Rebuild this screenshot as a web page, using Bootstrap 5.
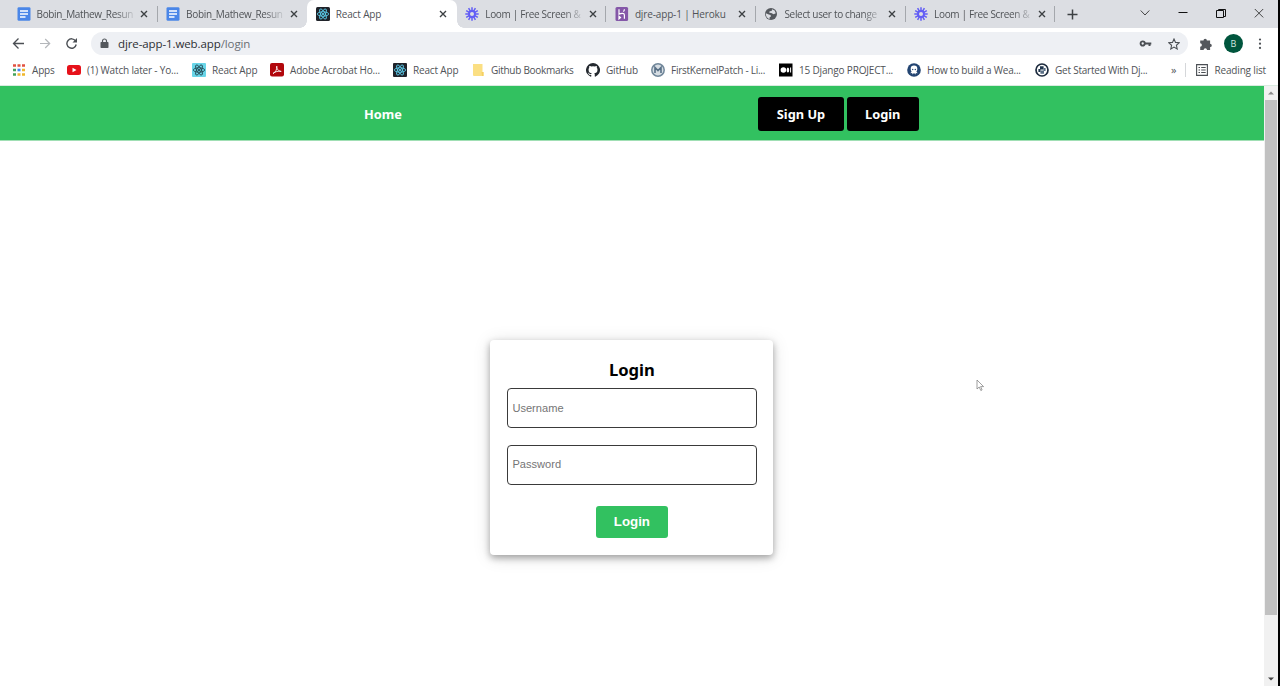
<!DOCTYPE html>
<html lang="en">

<head>
    <meta charset="UTF-8">
    <meta name="viewport" content="width=device-width, initial-scale=1.0">
    <title>React App</title>
    <link href="https://cdn.jsdelivr.net/npm/bootstrap@5.3.0/dist/css/bootstrap.min.css" rel="stylesheet">
    <style>
        body {
            width: 1280px;
            height: 686px;
            overflow: hidden;
            background: #fff;
            font-family: 'Open Sans', 'Noto Sans', sans-serif;
            font-size: 10px;
            line-height: 14px;
            color: #505357;
        }

        svg { display: block; flex: none; }

        .window-frame { width: 1278px; height: 686px; }
        .window-edge { width: 2px; background: #000; }

        /* tab strip */
        .tab-strip { height: 28px; background: #dcdee3; padding-left: 8px; }
        .browser-tab {
            width: 149.6px;
            height: 28px;
            padding: 0 9.5px 0 8.5px;
            position: relative;
        }
        .tab-title {
            width: 98px;
            margin-left: 6px;
            white-space: nowrap;
            letter-spacing: -.14px;
        }
        .tab-fade {
            letter-spacing: -.33px;
            -webkit-mask-image: linear-gradient(90deg, #000 80%, rgba(0, 0, 0, .15) 99%);
            mask-image: linear-gradient(90deg, #000 80%, rgba(0, 0, 0, .15) 99%);
        }
        .tab-line::after {
            content: '';
            position: absolute;
            right: 0;
            top: 6px;
            width: 1px;
            height: 16px;
            background: #a4a7ac;
        }
        .tab-active { background: #fff; border-radius: 7px 7px 0 0; }
        .tab-active::before, .tab-active::after {
            content: '';
            position: absolute;
            bottom: 0;
            width: 7px;
            height: 7px;
        }
        .tab-active::before { left: -7px; background: radial-gradient(circle at 0 0, transparent 6.5px, #fff 7px); }
        .tab-active::after { right: -7px; background: radial-gradient(circle at 100% 0, transparent 6.5px, #fff 7px); }
        .new-tab { margin-left: 12px; }
        .window-buttons { gap: 28px; padding-right: 14px; }

        /* toolbar */
        .toolbar { height: 30px; padding: 1px 12px 0 12px; }
        .go-forward { margin-left: 15px; }
        .reload { margin-left: 15px; }
        .address-bar {
            width: 1097px;
            height: 23px;
            margin-left: 13px;
            padding: 0 8px 0 9px;
            border-radius: 12px;
            background: #eef0f4;
            font-size: 11.5px;
            letter-spacing: -.1px;
            color: #2c2f33;
        }
        .address-text { margin-left: 9px; }
        .address-path { color: #6b6f74; }
        .extensions { margin-left: 11px; }
        .avatar-dot {
            width: 19px;
            height: 19px;
            margin-left: 11px;
            border-radius: 50%;
            background: #00553d;
            color: #d5e8e0;
            font-size: 9px;
        }
        .menu-dots { margin-left: 15px; }

        /* bookmarks */
        .bookmarks { height: 28px; padding: 0 0 3px 12px; border-bottom: 1px solid #d9ebe0; letter-spacing: -.17px; }
        .bookmark { flex: none; gap: 6px; white-space: nowrap; }
        .bookmark:nth-child(1) { width: 55px; }
        .bookmark:nth-child(2) { width: 125px; }
        .bookmark:nth-child(3) { width: 78px; }
        .bookmark:nth-child(4) { width: 123px; }
        .bookmark:nth-child(5) { width: 79px; }
        .bookmark:nth-child(6) { width: 114px; letter-spacing: -.28px; }
        .bookmark:nth-child(7) { width: 65px; }
        .bookmark:nth-child(8) { width: 128px; letter-spacing: -.26px; }
        .bookmark:nth-child(9) { width: 128px; }
        .bookmark:nth-child(10) { width: 128px; letter-spacing: -.22px; }
        .bookmark:nth-child(11) { width: 136px; letter-spacing: -.22px; }
        .reading-list { gap: 7px; }
        .more-marks { width: 14px; font-size: 11px; }
        .marks-line { width: 1px; height: 14px; background: #d5d7da; margin-right: 9.5px; }

        /* page */
        .page-view { height: 600px; }
        .site-nav {
            height: 54px;
            padding-top: 1px;
            background: #32c160;
            font-family: 'Noto Sans', 'Open Sans', sans-serif;
            font-weight: 700;
            font-size: 12.8px;
            box-shadow: 0 1px 0 #a0dfb4;
        }
        .nav-home { margin-left: 364px; padding-top: 1px; color: #fff; width: 394px; }
        .nav-dark {
            height: 34px;
            padding-top: 1px;
            background: #000;
            color: #fff;
            border-radius: 3px;
            margin-right: 3px;
        }
        .nav-signup { width: 86px; }
        .nav-login { width: 71.5px; }
        .login-box {
            width: 283px;
            height: 215px;
            margin: 200px 0 0 490.4px;
            padding: 17px 16px 16px;
            border-radius: 4px;
            background: #fff;
            box-shadow: 0 3px 7px rgba(0, 0, 0, .32), 0 2px 18px rgba(0, 0, 0, .12);
        }
        .login-title {
            font-family: 'Noto Sans', 'Open Sans', sans-serif;
            font-size: 16.6px;
            line-height: 26px;
            font-weight: 700;
            color: #000;
            margin: 0 0 5px;
        }
        .login-field {
            width: 250px;
            height: 40px;
            border: 1px solid #3a3a3a;
            border-radius: 4px;
            padding: 0 4px 0 4.5px;
            margin-bottom: 17px;
            font-family: 'Liberation Sans', Arial, sans-serif;
            font-size: 11.1px;
            outline: 0;
        }
        .login-field[type=password] { padding-bottom: 2px; }
        .login-field::placeholder { color: #757575; opacity: 1; }
        .login-submit {
            width: 72px;
            height: 32px;
            margin-top: 4px;
            border: 0;
            border-radius: 3px;
            background: #32c160;
            color: #fff;
            font-family: 'Liberation Sans', Arial, sans-serif;
            font-weight: 700;
            font-size: 13.3px;
            padding: 0;
        }

        /* scrollbar */
        .scroll-track { width: 14px; height: 600px; background: #f1f1f1; padding: 0 1px; }
        .scroll-thumb { height: 515px; background: #c1c1c1; }
        .scroll-cap { height: 14px; }

        .mouse-pointer { position: absolute; left: 976px; top: 379px; }
    </style>
</head>

<body>
    <!-- shared icons -->
    <svg width="0" height="0" class="position-absolute">
        <symbol id="doc" viewBox="0 0 14 14">
            <rect x=".5" y=".2" width="13" height="13.6" rx="1.4" fill="#4a86e8" />
            <path d="M3 4h8M3 7h8M3 10h5.5" stroke="#fff" stroke-width="1.4" />
        </symbol>
        <symbol id="react" viewBox="0 0 14 14">
            <g fill="none" stroke="currentColor" stroke-width=".8">
                <ellipse cx="7" cy="7" rx="5.7" ry="2.2" />
                <ellipse cx="7" cy="7" rx="5.7" ry="2.2" transform="rotate(60 7 7)" />
                <ellipse cx="7" cy="7" rx="5.7" ry="2.2" transform="rotate(120 7 7)" />
            </g>
            <circle cx="7" cy="7" r="1.1" fill="currentColor" />
        </symbol>
        <symbol id="loom" viewBox="0 0 14 14">
            <g stroke="#625df5" stroke-width="1.5">
                <path d="M7 .3v13.4M.3 7h13.4M3.6 1.2l6.8 11.6M10.4 1.2L3.6 12.8M1.2 3.6l11.6 6.8M1.2 10.4l11.6-6.8" />
            </g>
            <circle cx="7" cy="7" r="3.9" fill="#625df5" />
            <circle cx="7" cy="7" r="2" fill="#dcdee3" />
        </symbol>
        <symbol id="cross" viewBox="0 0 8 8">
            <path d="M1 1l6 6M7 1L1 7" stroke="#3c4043" stroke-width="1.35" />
        </symbol>
    </svg>

    <div class="d-flex">
        <div class="window-frame">
            <!-- tab strip -->
            <div class="tab-strip d-flex align-items-center">
                <div class="browser-tab tab-line d-flex align-items-center">
                    <svg width="14" height="14"><use href="#doc" /></svg>
                    <div class="tab-title tab-fade">Bobin_Mathew_Resun</div>
                    <svg class="ms-auto" width="8" height="8"><use href="#cross" /></svg>
                </div>
                <div class="browser-tab d-flex align-items-center">
                    <svg width="14" height="14"><use href="#doc" /></svg>
                    <div class="tab-title tab-fade">Bobin_Mathew_Resun</div>
                    <svg class="ms-auto" width="8" height="8"><use href="#cross" /></svg>
                </div>
                <div class="browser-tab tab-active d-flex align-items-center">
                    <svg width="14" height="14" color="#61dafb"><rect width="14" height="14" rx="1.5" fill="#20232a" /><use href="#react" /></svg>
                    <div class="tab-title">React App</div>
                    <svg class="ms-auto" width="8" height="8"><use href="#cross" /></svg>
                </div>
                <div class="browser-tab tab-line d-flex align-items-center">
                    <svg width="14" height="14"><use href="#loom" /></svg>
                    <div class="tab-title tab-fade">Loom | Free Screen &amp;</div>
                    <svg class="ms-auto" width="8" height="8"><use href="#cross" /></svg>
                </div>
                <div class="browser-tab tab-line d-flex align-items-center">
                    <svg width="14" height="14" viewBox="0 0 14 14"><rect x=".5" width="12.6" height="14" rx="1.5" fill="#8457a8" /><path d="M4 2.3v4.8c2-.9 5.4-1.3 5.4.8v3.8M4 9.3v2.6l1.5-1.3zM9.4 2.3c0 1-.4 1.7-1 2.3" fill="none" stroke="#fff" stroke-width="1.2" /></svg>
                    <div class="tab-title">djre-app-1 | Heroku</div>
                    <svg class="ms-auto" width="8" height="8"><use href="#cross" /></svg>
                </div>
                <div class="browser-tab tab-line d-flex align-items-center">
                    <svg width="14" height="14" viewBox="0 0 14 14"><circle cx="7" cy="7" r="6" fill="#55595e" /><path d="M8 2.2l2.6 1.2 1.2 2.8-2.2 1L7.3 6l-2-.3.3-1.5L7.7 4zM1.8 6.3l3 1.2 1.8.4.3 1.6-1.4 1 .2 1.6C3.5 11.7 1.6 9.3 1.8 6.3z" fill="#dcdee3" /></svg>
                    <div class="tab-title tab-fade">Select user to change</div>
                    <svg class="ms-auto" width="8" height="8"><use href="#cross" /></svg>
                </div>
                <div class="browser-tab tab-line d-flex align-items-center">
                    <svg width="14" height="14"><use href="#loom" /></svg>
                    <div class="tab-title tab-fade">Loom | Free Screen &amp;</div>
                    <svg class="ms-auto" width="8" height="8"><use href="#cross" /></svg>
                </div>
                <svg class="new-tab" width="11" height="11" viewBox="0 0 11 11"><path d="M5.5.5v10M.5 5.5h10" stroke="#3c4043" stroke-width="1.5" /></svg>
                <div class="window-buttons d-flex align-items-center ms-auto">
                    <svg width="10" height="12" viewBox="0 0 10 12"><path d="M.7 2.5L5 7l4.3-4.5" fill="none" stroke="#333" stroke-width=".9" /></svg>
                    <svg width="10" height="12" viewBox="0 0 10 12"><path d="M.5 4.5h9" stroke="#111" /></svg>
                    <svg width="10" height="12" viewBox="0 0 10 12"><path d="M.5 2.500h7v7h-7zM2.500 2.500v-1h7v7h-2" fill="none" stroke="#111" /></svg>
                    <svg width="10" height="12" viewBox="0 0 10 12"><path d="M.8 1l8.4 8.4M9.2 1L.8 9.4" stroke="#333" stroke-width=".9" /></svg>
                </div>
            </div>

            <!-- toolbar -->
            <div class="toolbar d-flex align-items-center">
                <svg width="13" height="12" viewBox="0 0 13 12"><path d="M12 5.5H1.500M6.5.5l-5 5 5 5" fill="none" stroke="#4b4f54" stroke-width="1.3" /></svg>
                <svg class="go-forward" width="11" height="12" viewBox="0 0 11 12"><path d="M0 5.5h10M5.2 1l4.5 4.5-4.5 4.5" fill="none" stroke="#b4b7bb" stroke-width="1.2" /></svg>
                <svg class="reload" width="12" height="12" viewBox="0 0 12 12"><path d="M9.5 2.900A4.700 4.700 0 1 0 10.200 6.500" fill="none" stroke="#4b4f54" stroke-width="1.400" /><path d="M11 0v4.500H6.500z" fill="#4b4f54" /></svg>
                <div class="address-bar d-flex align-items-center">
                    <svg width="9" height="11" viewBox="0 0 9 11"><rect x=".5" y="4" width="8" height="6" rx=".8" fill="#54585d" /><path d="M2.5 4.500V3a2 2 0 0 1 4 0v1.500" fill="none" stroke="#54585d" stroke-width="1.200" /></svg>
                    <div class="address-text">djre-app-1.web.app<span class="address-path">/login</span></div>
                    <svg class="ms-auto" width="13" height="8" viewBox="0 0 13 8"><circle cx="3.700" cy="3.500" r="2.100" fill="none" stroke="#4b4f54" stroke-width="1.900" /><path d="M6 3.500h6.300M10.500 3.500v2.600" stroke="#4b4f54" stroke-width="2" /></svg>
                    <svg class="ms-3" width="12" height="12" viewBox="0 0 12 12"><path d="M6 1l1.500 3.400 3.700.4-2.800 2.500.8 3.700L6 9.100 2.800 11l.8-3.700L.8 4.800l3.700-.4z" fill="none" stroke="#4b4f54" stroke-width="1.100" /></svg>
                </div>
                <svg class="extensions" width="14" height="14" viewBox="0 0 14 14"><path d="M1.200 3.500h3.300a1.700 1.700 0 1 1 3.400 0h3.200v3.200a1.700 1.700 0 1 1 0 3.400V13H8a1.700 1.700 0 0 0-3.400 0H1.200V9.700a1.700 1.700 0 0 0 0-3.400z" fill="#54585d" /></svg>
                <div class="avatar-dot d-flex align-items-center justify-content-center">B</div>
                <svg class="menu-dots" width="4" height="12" viewBox="0 0 4 12" fill="#4b4f54"><circle cx="2" cy="1.500" r="1.100" /><circle cx="2" cy="5.700" r="1.100" /><circle cx="2" cy="9.900" r="1.100" /></svg>
            </div>

            <!-- bookmarks bar -->
            <div class="bookmarks d-flex align-items-center">
                <div class="bookmark d-flex align-items-center">
                    <svg width="14" height="14" viewBox="0 0 14 14"><path d="M1 2.500h3M5.500 2.500h3M10 2.500h3" stroke="#e25241" stroke-width="2.600" /><path d="M1 7h3M1 11.500h3" stroke="#44a35c" stroke-width="2.600" /><path d="M5.500 7h3" stroke="#4285f4" stroke-width="2.600" /><path d="M10 7h3M5.500 11.500h3M10 11.500h3" stroke="#efb72d" stroke-width="2.600" /></svg>
                    <span>Apps</span>
                </div>
                <div class="bookmark d-flex align-items-center">
                    <svg width="14" height="14" viewBox="0 0 14 14"><rect y="2" width="14" height="10" rx="2.500" fill="#e6111a" /><path d="M5.500 4.700v4.600L9.500 7z" fill="#fff" /></svg>
                    <span>(1) Watch later - Yo...</span>
                </div>
                <div class="bookmark d-flex align-items-center">
                    <svg width="14" height="14" color="#1d3c46"><rect width="14" height="14" rx="1" fill="#69d5e8" /><use href="#react" /></svg>
                    <span>React App</span>
                </div>
                <div class="bookmark d-flex align-items-center">
                    <svg width="14" height="14" viewBox="0 0 14 14"><rect width="14" height="13.500" rx="2" fill="#b1070c" /><path d="M3 10.500C5.500 9.500 7.300 6 6.800 3.200c-.8 2 1.800 5.300 4.400 5.200-2.500-.8-6.500.4-8.200 2.100z" fill="none" stroke="#fff" stroke-width=".9" /></svg>
                    <span>Adobe Acrobat Ho...</span>
                </div>
                <div class="bookmark d-flex align-items-center">
                    <svg width="14" height="14" color="#61dafb"><rect width="14" height="14" rx="1" fill="#20232a" /><use href="#react" /></svg>
                    <span>React App</span>
                </div>
                <div class="bookmark d-flex align-items-center">
                    <svg width="13" height="14" viewBox="0 0 13 14"><path d="M1 1h9.500v8h1V13H1.500L1 12z" fill="#fbdf83" /><path d="M9.500 9h2v4h-1.500z" fill="#f5d061" /></svg>
                    <span>Github Bookmarks</span>
                </div>
                <div class="bookmark d-flex align-items-center">
                    <svg width="14" height="14" viewBox="0 0 16 16"><path fill="#24292f" d="M8 0a8 8 0 0 0-2.530 15.590c.4.070.550-.170.550-.380v-1.490c-2.010.370-2.530-.490-2.690-.940-.090-.230-.480-.940-.820-1.130-.280-.150-.680-.520-.010-.530.630-.010 1.080.580 1.230.820.720 1.210 1.870.870 2.330.660.070-.520.280-.870.510-1.070-1.780-.2-3.640-.890-3.640-3.950 0-.870.310-1.590.820-2.150-.080-.2-.360-1.020.080-2.120 0 0 .670-.210 2.200.820a7.500 7.500 0 0 1 4 0c1.530-1.040 2.200-.820 2.200-.820.440 1.100.160 1.920.080 2.120.510.560.820 1.270.820 2.150 0 3.070-1.870 3.750-3.650 3.950.290.250.540.730.540 1.480v2.200c0 .210.150.460.550.380A8 8 0 0 0 8 0z" /></svg>
                    <span>GitHub</span>
                </div>
                <div class="bookmark d-flex align-items-center">
                    <svg width="14" height="14" viewBox="0 0 14 14"><circle cx="7" cy="7" r="6.200" fill="#d6dde3" stroke="#71879a" stroke-width="1.500" /><path d="M4 10V4.500l3 3 3-3V10" fill="none" stroke="#587086" stroke-width="1.600" /></svg>
                    <span>FirstKernelPatch - Li...</span>
                </div>
                <div class="bookmark d-flex align-items-center">
                    <svg width="14" height="14" viewBox="0 0 14 14"><rect y=".5" width="13.500" height="13" fill="#000" /><circle cx="4.400" cy="7" r="2.800" fill="#fff" /><ellipse cx="8.900" cy="7" rx="1.300" ry="2.600" fill="#fff" /><path d="M11.600 4.500v5" stroke="#fff" /></svg>
                    <span>15 Django PROJECT...</span>
                </div>
                <div class="bookmark d-flex align-items-center">
                    <svg width="14" height="14" viewBox="0 0 14 14"><circle cx="7" cy="7" r="6.800" fill="#234572" /><path d="M3.700 5.800a3.300 3.300 0 0 1 6.600 0c0 1.800-.6 2.500-.9 3l1.400 1.400-2-.2-.3 1.400L7 10l-1.500 1.400-.3-1.400-2 .2 1.400-1.400c-.3-.5-.9-1.200-.9-3z" fill="#fff" /><circle cx="5.700" cy="6.500" r=".7" fill="#234572" /><circle cx="8.300" cy="6.500" r=".7" fill="#234572" /></svg>
                    <span>How to build a Wea...</span>
                </div>
                <div class="bookmark d-flex align-items-center">
                    <svg width="14" height="14" viewBox="0 0 14 14"><circle cx="7" cy="7" r="6" fill="#fff" stroke="#1d2b3e" stroke-width="1.700" /><path d="M5 3.300h3.600v3.200H5.500v2.500H3.400V6H5z" fill="#1f344c" /><path d="M9 10.700H5.400V7.500h3.100V5h2.100v3H9z" fill="#5b7086" /></svg>
                    <span>Get Started With Dj...</span>
                </div>
                <div class="more-marks">»</div>
                <div class="marks-line"></div>
                <div class="bookmark reading-list d-flex align-items-center">
                    <svg width="12" height="12" viewBox="0 0 12 12"><path d="M.6.6h10.800v10.800H.6z" fill="none" stroke="#4b4f54" stroke-width="1.100" /><path d="M2.500 3.500H4M2.500 6H4M2.500 8.500H4M5.200 3.500h4.500M5.200 6h4.500M5.200 8.500h4.500" stroke="#4b4f54" /></svg>
                    <span>Reading list</span>
                </div>
            </div>

            <!-- page content -->
            <div class="page-view d-flex">
                <div class="flex-grow-1">
                    <nav class="site-nav d-flex align-items-center">
                        <div class="nav-home">Home</div>
                        <div class="nav-dark nav-signup d-flex align-items-center justify-content-center">Sign Up</div>
                        <div class="nav-dark nav-login d-flex align-items-center justify-content-center">Login</div>
                    </nav>
                    <form class="login-box d-flex flex-column align-items-center">
                        <h1 class="login-title">Login</h1>
                        <input class="login-field" type="text" placeholder="Username">
                        <input class="login-field" type="password" placeholder="Password">
                        <button class="login-submit" type="button">Login</button>
                    </form>
                </div>
                <div class="scroll-track d-flex flex-column">
                    <div class="scroll-cap d-flex align-items-center justify-content-center">
                        <svg width="6" height="4" viewBox="0 0 6 4"><path d="M0 3.500L3 .5l3 3z" fill="#8a8a8a" /></svg>
                    </div>
                    <div class="scroll-thumb"></div>
                    <div class="scroll-cap d-flex align-items-center justify-content-center mt-auto">
                        <svg width="6" height="4" viewBox="0 0 6 4"><path d="M0 .5L3 3.500l3-3z" fill="#444" /></svg>
                    </div>
                </div>
            </div>
        </div>
        <div class="window-edge"></div>
    </div>

    <svg class="mouse-pointer" width="9" height="13" viewBox="0 0 9 13"><path d="M1 1v9l2.200-2 1.600 3.500 1.300-.6-1.500-3.300h3z" fill="#fff" stroke="#777" stroke-width=".7" /></svg>

    <script src="https://cdn.jsdelivr.net/npm/bootstrap@5.3.0/dist/js/bootstrap.bundle.min.js"></script>
</body>

</html>
